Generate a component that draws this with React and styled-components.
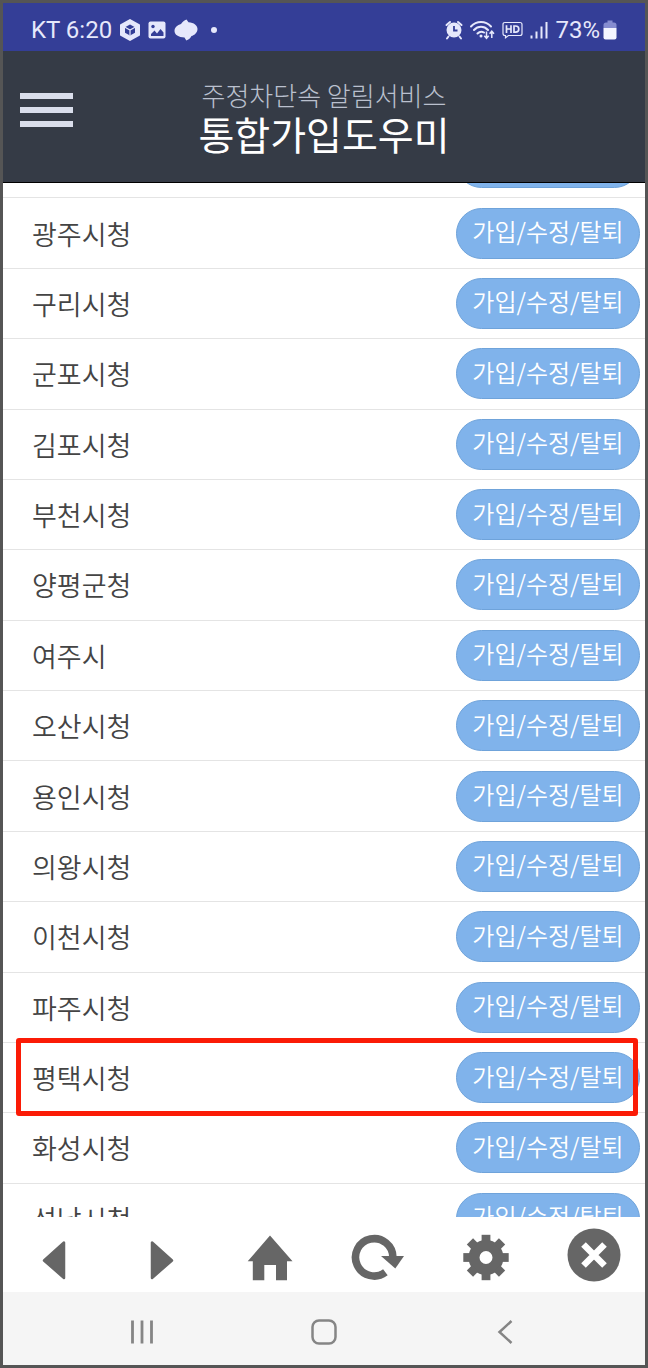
import React from 'react'
import styled, { createGlobalStyle } from 'styled-components'

const cities = [
    '광명시청',
    '광주시청',
    '구리시청',
    '군포시청',
    '김포시청',
    '부천시청',
    '양평군청',
    '여주시',
    '오산시청',
    '용인시청',
    '의왕시청',
    '이천시청',
    '파주시청',
    '평택시청',
    '화성시청',
    '성남시청'
]

const selectedCity = '평택시청'

const StatusBar = () => (
    <Status>
        <StatusGroup $gap={8}>
            <StatusText>KT 6:20</StatusText>
            <svg width="20" height="22" viewBox="0 0 20 22">
                <path d="M10 1 L19 6 V16 L10 21 L1 16 V6 Z" fill="#e6e8fb" stroke="#e6e8fb" strokeWidth="2" strokeLinejoin="round" />
                <path d="M10 5.5 L15 8.2 V13.8 L10 16.5 L5 13.8 V8.2 Z" fill="#343e97" />
                <path d="M5 8.2 L10 11 L15 8.2 M10 11 V16.5" fill="none" stroke="#e6e8fb" strokeWidth="1.2" />
            </svg>
            <svg width="18" height="18" viewBox="0 0 18 18">
                <rect x="0.5" y="0.5" width="17" height="17" rx="2" fill="#e6e8fb" />
                <circle cx="5" cy="5.5" r="1.7" fill="#343e97" />
                <path d="M3 15 V13 L6.5 9.5 L9 12.5 L12.5 8 L15.5 11.5 V15 Z" fill="#343e97" />
            </svg>
            <svg width="24" height="22" viewBox="0 0 24 22">
                <path d="M12.5 0.5 L14.5 3.2 C20 3.5 23.5 6.5 23.5 10 C23.5 13.5 20.5 16.3 17.5 17 C16 19.5 14.500 20.8 12.3 21.5 L10.5 18.5 C4.500 18.3 0.5 15.8 0.5 12 C0.5 8.500 3.500 5.800 7 5 C8.500 2.800 10.200 1.300 12.500 0.500 Z" fill="#e6e8fb" />
            </svg>
            <Dot />
        </StatusGroup>
        <StatusGroup $gap={7}>
            <svg width="18" height="20" viewBox="0 0 18 20">
                <circle cx="9" cy="10" r="7.5" fill="#e6e8fb" />
                <path d="M1.5 5 L5 2 M16.5 5 L13 2 M3.5 16.5 L2 18.5 M14.5 16.5 L16 18.5" stroke="#e6e8fb" strokeWidth="2" strokeLinecap="round" />
                <path d="M9 6 V10.5 H12.5" fill="none" stroke="#343e97" strokeWidth="1.8" />
            </svg>
            <svg width="25" height="20" viewBox="0 0 25 20">
                <path d="M1 6.5 C6.5 0.5 15.5 0.5 21 6.5 M4 10 C8 5.8 14 5.8 18 10 M7.5 13.5 C9.5 11.5 12 11.3 14 12.5" fill="none" stroke="#e6e8fb" strokeWidth="2" strokeLinecap="round" />
                <circle cx="11" cy="16" r="1.5" fill="#e6e8fb" />
                <path d="M16.5 11.5 V18 M14.3 15.8 L16.5 18.3 L18.7 15.8 M21.8 18 V11.5 M19.6 13.7 L21.8 11.2 L24 13.7" fill="none" stroke="#e6e8fb" strokeWidth="1.5" />
            </svg>
            <svg width="21" height="18" viewBox="0 0 21 18">
                <path d="M3 1.5 H18 Q20 1.5 20 3.5 V12.5 Q20 14.5 18 14.5 H6.5 L3.5 16.8 V14.5 H3 Q1 14.5 1 12.5 V3.5 Q1 1.5 3 1.5 Z" fill="none" stroke="#e6e8fb" strokeWidth="1.2" />
                <path d="M4.5 4.2 V12 M9 4.2 V12 M4.5 8 H9 M12 5 H13.5 Q16.8 5 16.8 8 Q16.8 11.2 13.5 11.2 H12 Z" fill="none" stroke="#e6e8fb" strokeWidth="1.7" />
            </svg>
            <svg width="18" height="18" viewBox="0 0 18 18">
                <path d="M1.5 14.5 V17.5 M6.5 10.5 V17.5 M11.5 5.5 V17.5 M16.5 1 V17.5" stroke="#e6e8fb" strokeWidth="2" />
            </svg>
            <StatusGroup $gap={3}>
                <StatusText>73%</StatusText>
                <svg width="14" height="20" viewBox="0 0 14 20">
                    <path d="M4.5 0.5 H9.5 V2.5 H11 Q13.5 2.5 13.5 5 V8 H0.5 V5 Q0.5 2.5 3 2.5 H4.5 Z" fill="#868dd0" />
                    <path d="M0.5 8 H13.5 V17.5 Q13.5 19.5 11.5 19.5 H2.5 Q0.5 19.5 0.5 17.5 Z" fill="#f4f5ff" />
                </svg>
            </StatusGroup>
        </StatusGroup>
    </Status>
)

const Header = () => (
    <HeaderBar>
        <MenuBtn aria-label="메뉴">
            <MenuLine />
            <MenuLine />
            <MenuLine />
        </MenuBtn>
        <Titles>
            <SubTitle>주정차단속 알림서비스</SubTitle>
            <Title>통합가입도우미</Title>
        </Titles>
    </HeaderBar>
)

const CityList = () => (
    <ListView>
        <List>
            {cities.map(city => (
                <Row key={city}>
                    <CityName>{city}</CityName>
                    <JoinBtn>가입/수정/탈퇴</JoinBtn>
                    {city === selectedCity && <Marker />}
                </Row>
            ))}
        </List>
    </ListView>
)

const Toolbar = () => (
    <Tools>
        <ToolBtn aria-label="뒤로">
            <svg width="54" height="54" viewBox="0 0 54 54">
                <path d="M17 32.5 L37 14.5 V50 Z" fill="#666" stroke="#666" strokeWidth="2.5" strokeLinejoin="round" />
            </svg>
        </ToolBtn>
        <ToolBtn aria-label="앞으로">
            <svg width="54" height="54" viewBox="0 0 54 54">
                <path d="M37 32.5 L17 14.5 V50 Z" fill="#666" stroke="#666" strokeWidth="2.5" strokeLinejoin="round" />
            </svg>
        </ToolBtn>
        <ToolBtn aria-label="홈">
            <svg width="54" height="54" viewBox="0 0 54 54">
                <path d="M27 7.5 L49.5 33.3 H44 V52.3 H33 V37 H21.3 V52.3 H9.8 V33.3 H4.7 Z" fill="#666" />
            </svg>
        </ToolBtn>
        <ToolBtn aria-label="새로고침">
            <svg width="54" height="54" viewBox="0 0 54 54">
                <path d="M34.4 44.3 A18.7 18.7 0 1 1 41.9 29.5" fill="none" stroke="#666" strokeWidth="7.6" />
                <path d="M30 28 H53 L44.3 40.5 Z" fill="#666" />
            </svg>
        </ToolBtn>
        <ToolBtn aria-label="설정">
            <svg width="54" height="54" viewBox="0 0 54 54">
                <circle cx="27" cy="29.5" r="12" fill="none" stroke="#666" strokeWidth="11" />
                <g fill="#666">
                    {[0, 45, 90, 135, 180, 225, 270, 315].map(angle => (
                        <rect key={angle} x="22.6" y="6.8" width="8.8" height="8" transform={`rotate(${angle} 27 29.5)`} />
                    ))}
                </g>
            </svg>
        </ToolBtn>
        <ToolBtn aria-label="닫기">
            <svg width="54" height="54" viewBox="0 0 54 54">
                <circle cx="27" cy="27" r="26.5" fill="#666" />
                <path d="M16.5 16.5 L37.5 37.5 M37.5 16.5 L16.5 37.5" stroke="#fff" strokeWidth="6.5" />
            </svg>
        </ToolBtn>
    </Tools>
)

const NavBar = () => (
    <Nav>
        <NavBtn aria-label="최근 앱">
            <svg width="26" height="26" viewBox="0 0 26 26">
                <path d="M3.5 1.5 V24.5 M13 1.5 V24.5 M22.5 1.5 V24.5" stroke="#858585" strokeWidth="2.8" />
            </svg>
        </NavBtn>
        <NavBtn aria-label="홈 화면">
            <svg width="26" height="26" viewBox="0 0 26 26">
                <rect x="1.5" y="1.5" width="23" height="23" rx="6.5" fill="none" stroke="#858585" strokeWidth="2.5" />
            </svg>
        </NavBtn>
        <NavBtn aria-label="이전">
            <svg width="26" height="26" viewBox="0 0 26 26">
                <path d="M18.5 2 L6.5 13 L18.5 24" fill="none" stroke="#858585" strokeWidth="2.5" />
            </svg>
        </NavBtn>
    </Nav>
)

export default function App() {
    return (
        <Screen>
            <GlobalStyle />
            <StatusBar />
            <Header />
            <CityList />
            <Toolbar />
            <NavBar />
        </Screen>
    )
}

const GlobalStyle = createGlobalStyle`
    * {
        box-sizing: border-box;
    }
    body {
        margin: 0;
        font-family: "Noto Sans CJK KR", sans-serif;
    }
    button {
        padding: 0;
        border: 0;
        background: none;
        font-family: inherit;
        cursor: pointer;
    }
    svg {
        display: block;
        flex: none;
    }
`

const Screen = styled.div`
    display: flex;
    flex-direction: column;
    height: 100vh;
    border: 3px solid #555;
    background: #fff;
`

const Status = styled.div`
    display: flex;
    flex: none;
    align-items: center;
    justify-content: space-between;
    height: 48px;
    padding: 6px 28px 0;
    background: #343e97;
`

const StatusGroup = styled.div`
    display: flex;
    align-items: center;
    gap: ${({ $gap }) => $gap}px;
`

const StatusText = styled.span`
    color: #e6e8fb;
    font-family: Roboto, sans-serif;
    font-size: 24px;
    line-height: 28px;
`

const Dot = styled.span`
    width: 6px;
    height: 6px;
    margin-left: 5px;
    border-radius: 50%;
    background: #e6e8fb;
`

const HeaderBar = styled.header`
    display: grid;
    flex: none;
    grid-template-columns: 1fr auto 1fr;
    height: 132px;
    padding: 25px 17px 0;
    border-bottom: 1px solid #000;
    background: #353b46;
`

const MenuBtn = styled.button`
    display: flex;
    flex-direction: column;
    gap: 8px;
    width: 53px;
    height: 34px;
    margin-top: 17px;
`

const MenuLine = styled.span`
    width: 100%;
    height: 6px;
    background: #dadeeb;
`

const Titles = styled.div`
    text-align: center;
    white-space: nowrap;
`

const SubTitle = styled.div`
    color: #bac0ce;
    font-size: 26px;
    font-weight: 300;
    line-height: 38px;
`

const Title = styled.h1`
    margin: 0;
    color: #fff;
    font-size: 39px;
    font-weight: 400;
    line-height: 38px;
`

const ListView = styled.main`
    display: flex;
    flex: 1 1 0;
    flex-direction: column;
    min-height: 0;
    overflow: hidden;
`

const List = styled.ul`
    display: flex;
    flex: 1 0 auto;
    flex-direction: column;
    margin: -55px 0 -37px;
    padding: 0;
    list-style: none;
`

const Row = styled.li`
    position: relative;
    display: flex;
    flex: 1 0 0;
    align-items: center;
    justify-content: space-between;
    min-height: 70px;
    padding: 0 5px 0 29px;
    border-bottom: 1px solid #e4e4e4;
`

const CityName = styled.span`
    padding-top: 1px;
    color: #444;
    font-size: 27px;
    font-weight: 350;
    line-height: 40px;
`

const JoinBtn = styled.button`
    width: 184px;
    height: 51px;
    padding-bottom: 4px;
    border: 1px solid #6fa3da;
    border-radius: 26px;
    background: #80b3eb;
    color: #fff;
    font-size: 24px;
    font-weight: 350;
    line-height: 36px;
    white-space: nowrap;
`

const Marker = styled.div`
    position: absolute;
    top: -5px;
    right: 7px;
    bottom: -4px;
    left: 13px;
    border: 5px solid #fb1b06;
    border-radius: 3px;
    pointer-events: none;
`

const Tools = styled.div`
    display: flex;
    flex: none;
    justify-content: space-between;
    padding: 11px 24px 10px;
    background: #fff;
`

const ToolBtn = styled.button`
    width: 54px;
    height: 54px;
`

const Nav = styled.nav`
    display: flex;
    flex: none;
    height: 73px;
    padding: 6px 48px 0;
    background: #f5f5f5;
`

const NavBtn = styled.button`
    display: flex;
    flex: 1;
    align-items: center;
    justify-content: center;
`
